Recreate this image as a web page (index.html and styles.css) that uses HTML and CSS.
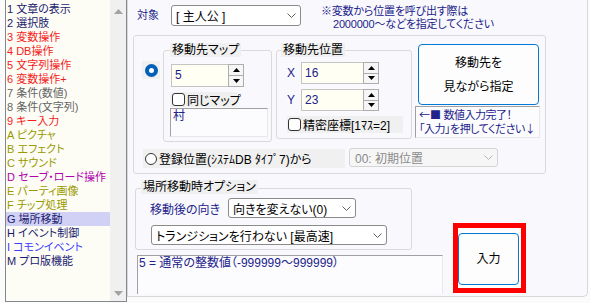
FILE: index.html
```html
<!DOCTYPE html>
<html lang="ja">

<head>
    <meta charset="UTF-8">
    <title>場所移動</title>
    <link rel="stylesheet" href="styles.css">
</head>

<body>
    <div class="cmd-list">
        <ul class="cmd-items">
            <li class="c-navy">1 文章の表示</li>
            <li class="c-navy">2 選択肢</li>
            <li class="c-red">3 変数操作</li>
            <li class="c-red">4 DB操作</li>
            <li class="c-red">5 文字列操作</li>
            <li class="c-red">6 変数操作+</li>
            <li class="c-gray">7 条件(数値)</li>
            <li class="c-gray">8 条件(文字列)</li>
            <li class="c-red">9 キー入力</li>
            <li class="c-olive">A ピクチャ</li>
            <li class="c-olive">B エフェクト</li>
            <li class="c-olive">C サウンド</li>
            <li class="c-purple">D セーブ・ロード操作</li>
            <li class="c-olive">E パーティ画像</li>
            <li class="c-olive">F チップ処理</li>
            <li class="c-navy selected">G 場所移動</li>
            <li class="c-navy">H イベント制御</li>
            <li class="c-blue">I コモンイベント</li>
            <li class="c-navy">M プロ版機能</li>
        </ul>
        <div class="cmd-scroll">
            <svg width="9" height="5" viewBox="0 0 9 5"><polygon points="0,5 4.5,0 9,5" fill="#a3a3a3"/></svg>
            <svg width="9" height="5" viewBox="0 0 9 5"><polygon points="0,0 4.5,5 9,0" fill="#a3a3a3"/></svg>
        </div>
    </div>

    <div class="panel">
        <div class="top-row">
            <span class="lbl lbl-target">対象</span>
            <div class="combo combo-target">
                <span>[ 主人公 ]</span>
                <svg width="9" height="5" viewBox="0 0 9 5"><polyline points="0.5,0.5 4.5,4.5 8.5,0.5" fill="none" stroke="#606060"/></svg>
            </div>
            <div class="note">
                <span>※変数から位置を呼び出す際は</span>
                <span class="note-2">2000000～などを指定してください</span>
            </div>
        </div>

        <div class="outer-grp">
            <div class="row-a">
                <div class="radio-cell"><span class="radio on"></span></div>

                <div class="grp grp-map">
                    <div class="grp-title">移動先マップ</div>
                    <div class="spin spin-map">
                        <span class="spin-field">5</span>
                        <span class="spin-btns">
                            <span><svg width="7" height="4" viewBox="0 0 7 4"><polygon points="0,4 3.5,0 7,4" fill="#000"/></svg></span>
                            <span><svg width="7" height="4" viewBox="0 0 7 4"><polygon points="0,0 3.5,4 7,0" fill="#000"/></svg></span>
                        </span>
                    </div>
                    <div class="check check-map"><span class="box"></span>同じマップ</div>
                    <div class="map-name">村</div>
                </div>

                <div class="grp grp-pos">
                    <div class="grp-title">移動先位置</div>
                    <div class="pos-row">
                        <span class="lbl pos-lbl">X</span>
                        <div class="spin spin-pos">
                            <span class="spin-field">16</span>
                            <span class="spin-btns">
                                <span><svg width="7" height="4" viewBox="0 0 7 4"><polygon points="0,4 3.5,0 7,4" fill="#000"/></svg></span>
                                <span><svg width="7" height="4" viewBox="0 0 7 4"><polygon points="0,0 3.5,4 7,0" fill="#000"/></svg></span>
                            </span>
                        </div>
                    </div>
                    <div class="pos-row">
                        <span class="lbl pos-lbl">Y</span>
                        <div class="spin spin-pos">
                            <span class="spin-field">23</span>
                            <span class="spin-btns">
                                <span><svg width="7" height="4" viewBox="0 0 7 4"><polygon points="0,4 3.5,0 7,4" fill="#000"/></svg></span>
                                <span><svg width="7" height="4" viewBox="0 0 7 4"><polygon points="0,0 3.5,4 7,0" fill="#000"/></svg></span>
                            </span>
                        </div>
                    </div>
                    <div class="check check-pos"><span class="box"></span>精密座標[1ﾏｽ=2]</div>
                </div>

                <div class="right-col">
                    <button class="btn pick-btn">移動先を<br>見ながら指定</button>
                    <div class="info"><span class="sym">←■</span> 数値入力完了！<br>「入力」を押してください<span class="sym">↓</span></div>
                </div>
            </div>

            <div class="row-b">
                <div class="reg-radio"><span class="radio"></span>登録位置(ｼｽﾃﾑDB ﾀｲﾌﾟ7)から</div>
                <div class="combo combo-dis">
                    <span>00: 初期位置</span>
                    <svg width="9" height="5" viewBox="0 0 9 5"><polyline points="0.5,0.5 4.5,4.5 8.5,0.5" fill="none" stroke="#b8b8b8"/></svg>
                </div>
            </div>
        </div>

        <div class="bottom">
            <div class="left-col">
                <div class="grp grp-opt">
                    <div class="grp-title">場所移動時オプション</div>
                    <div class="dir-row">
                        <span class="lbl dir-lbl">移動後の向き</span>
                        <div class="combo combo-dir">
                            <span>向きを変えない(0)</span>
                            <svg width="9" height="5" viewBox="0 0 9 5"><polyline points="0.5,0.5 4.5,4.5 8.5,0.5" fill="none" stroke="#606060"/></svg>
                        </div>
                    </div>
                    <div class="combo combo-trans">
                        <span>トランジションを行わない [最高速]</span>
                        <svg width="9" height="5" viewBox="0 0 9 5"><polyline points="0.5,0.5 4.5,4.5 8.5,0.5" fill="none" stroke="#606060"/></svg>
                    </div>
                </div>
                <div class="msg-box">5 = 通常の整数値（-999999～999999）</div>
            </div>
            <div class="red-box">
                <button class="btn enter-btn">入力</button>
            </div>
        </div>
    </div>
</body>

</html>
```

FILE: styles.css
```css
* {
    box-sizing: border-box;
}

body {
    margin: 0;
    width: 590px;
    height: 303px;
    overflow: hidden;
    display: flex;
    background-color: #fbfbfb;
    font-family: "Liberation Sans", "Noto Sans CJK JP", sans-serif;
    font-size: 11px;
    font-feature-settings: "palt";
    color: #000;
}

/* command list */

.cmd-list {
    margin: -2px 0 0 5px;
    width: 122px;
    height: 304px;
    display: flex;
    border: 1px solid #828790;
    background-color: #fdfdf6;
}

.cmd-items {
    flex: 1;
    margin: 0;
    padding: 3px 0 0 0;
    list-style: none;
}

.cmd-items li {
    height: 14px;
    line-height: 14px;
    padding-left: 1px;
    white-space: nowrap;
}

.cmd-items li.selected {
    background-color: #d1d1f5;
}

.c-navy { color: #1a1a6e; }
.c-red { color: #f41c1c; }
.c-gray { color: #666; }
.c-olive { color: #999900; }
.c-purple { color: #b000b0; }
.c-blue { color: #3c3cff; }

.cmd-scroll {
    width: 16px;
    display: flex;
    flex-direction: column;
    justify-content: space-between;
    align-items: center;
    padding: 10px 0 5px 0;
    background-color: #f0f0f0;
}

.cmd-scroll svg {
    display: block;
}

/* right panel */

.panel {
    width: 461px;
    height: 297px;
    padding: 5px 0 0 5px;
    border: 1px solid #d8d8d8;
    border-top: none;
    border-bottom-right-radius: 5px;
    background-color: #f9f9fd;
}

.lbl {
    color: #22228a;
}

.top-row {
    display: flex;
    align-items: flex-start;
    height: 21px;
    padding-left: 4px;
}

.lbl-target {
    width: 34px;
    line-height: 21px;
}

.combo {
    display: flex;
    align-items: center;
    justify-content: space-between;
    padding: 0 4px 0 4px;
    border: 1px solid #8a8a8a;
    border-radius: 3px;
    background-color: #fff;
    font-size: 12px;
    white-space: nowrap;
}

.combo svg {
    flex: none;
}

.combo-target {
    width: 130px;
    height: 21px;
}

.note {
    margin-left: 20px;
    display: flex;
    flex-direction: column;
    line-height: 12.5px;
    letter-spacing: -0.2px;
    color: #22228a;
}

.note-2 {
    padding-left: 12px;
}

.outer-grp {
    margin-top: 9px;
    width: 413px;
    height: 139px;
    padding: 8px 0 0 8px;
    border: 1px solid #dadada;
    border-radius: 3px;
}

.row-a {
    display: flex;
    align-items: flex-start;
    height: 98px;
}

.radio-cell {
    margin-top: 17px;
    width: 18px;
    height: 18px;
    display: flex;
    align-items: center;
    justify-content: center;
    background-color: #f0f0f0;
}

.radio {
    flex: none;
    width: 13px;
    height: 13px;
    border: 1px solid #333;
    border-radius: 50%;
    background-color: #fff;
}

.radio.on {
    border: 4px solid #005fb8;
    background-color: #fff;
}

/* group boxes */

.grp {
    border: 1px solid #dadada;
    border-radius: 3px;
}

.grp-title {
    width: fit-content;
    padding: 0 2px;
    line-height: 14px;
    margin-top: -8px;
    background-color: #f0f0f0;
    font-size: 12px;
    white-space: nowrap;
}

.grp-map {
    margin: 6px 0 0 3px;
    width: 109px;
    height: 92px;
}

.grp-map .grp-title {
    margin-left: 6px;
}

.spin {
    display: flex;
}

.spin-field {
    flex: 1;
    padding-left: 3px;
    border: 1px solid #c4c4c4;
    border-right: none;
    background-color: #fffff4;
    color: #22228a;
    font-size: 12px;
}

.spin-btns {
    width: 16px;
    display: flex;
    flex-direction: column;
}

.spin-btns span {
    flex: 1;
    display: flex;
    align-items: center;
    justify-content: center;
    border: 1px solid #adadad;
    background-color: #f6f6f6;
}

.spin-btns span + span {
    border-top: none;
}

.spin-map {
    margin: 7px 0 0 7px;
    width: 73px;
    height: 23px;
    line-height: 21px;
}

.check {
    display: flex;
    align-items: center;
    background-color: #f0f0f0;
    font-size: 12px;
    white-space: nowrap;
}

.box {
    flex: none;
    width: 13px;
    height: 13px;
    margin-right: 2px;
    border: 1px solid #333;
    border-radius: 3px;
    background-color: #fff;
}

.check-map {
    margin: 5px 0 0 6px;
    width: 67px;
    height: 15px;
    padding-left: 2px;
}

.map-name {
    margin: 1px 0 0 6px;
    width: 98px;
    height: 29px;
    padding: 1px 0 0 2px;
    line-height: 13px;
    border-top: 1px solid #a0a0a0;
    border-left: 1px solid #a0a0a0;
    border-right: 1px solid #e8e8e8;
    border-bottom: 1px solid #e8e8e8;
    background-color: #fcfcff;
    color: #22228a;
    font-size: 12px;
}

.grp-pos {
    margin: 6px 0 0 4px;
    width: 136px;
    height: 89px;
}

.grp-pos .grp-title {
    margin-left: 4px;
}

.pos-row {
    display: flex;
    align-items: center;
    margin-top: 5px;
    padding-left: 10px;
    height: 22px;
}

.pos-row + .pos-row {
    margin-top: 5px;
}

.pos-lbl {
    width: 14px;
    font-size: 12px;
}

.spin-pos {
    width: 78px;
    height: 22px;
    line-height: 20px;
}

.check-pos {
    margin: 5px 0 0 10px;
    width: 116px;
    height: 17px;
    padding-left: 1px;
}

.right-col {
    margin-left: 3px;
    width: 125px;
}

.btn {
    display: block;
    padding: 0;
    border: 1px solid #0078d4;
    border-radius: 4px;
    background-color: #fdfdfd;
    font-family: inherit;
    font-size: 12px;
    font-feature-settings: "palt";
    color: #000;
}

.pick-btn {
    margin-left: 3px;
    width: 121px;
    height: 61px;
    line-height: 24px;
}

.info {
    margin-top: 1px;
    height: 32px;
    padding: 1px 0 0 3px;
    line-height: 12.5px;
    letter-spacing: -0.5px;
    border-top: 1px solid #a0a0a0;
    border-left: 1px solid #a0a0a0;
    border-right: 1px solid #e8e8e8;
    border-bottom: 1px solid #e8e8e8;
    background-color: #fcfcff;
    color: #22228a;
    white-space: nowrap;
    overflow: hidden;
}

.sym {
    font-family: "Noto Sans CJK JP", sans-serif;
    font-feature-settings: normal;
    letter-spacing: 0;
}

.row-b {
    display: flex;
    align-items: flex-start;
    margin-top: 6px;
}

.reg-radio {
    display: flex;
    align-items: center;
    margin: 1px 0 0 1px;
    width: 202px;
    height: 19px;
    padding-left: 2px;
    background-color: #f0f0f0;
    font-size: 12px;
    white-space: nowrap;
}

.reg-radio .radio {
    width: 12px;
    height: 12px;
    margin-right: 2px;
}

.combo-dis {
    margin-left: 4px;
    width: 149px;
    height: 19px;
    padding-left: 5px;
    border-color: #d4d4d4;
    background-color: #f6f6f6;
    color: #8a8a8a;
}

/* bottom area */

.bottom {
    display: flex;
    align-items: flex-start;
    margin-top: 14px;
}

.left-col {
    margin-left: 2px;
    width: 308px;
}

.grp-opt {
    width: 277px;
    height: 62px;
}

.grp-opt .grp-title {
    margin-top: -9px;
    margin-left: 5px;
    line-height: 14px;
}

.dir-row {
    display: flex;
    align-items: center;
    margin-top: 4px;
    padding-left: 14px;
}

.dir-lbl {
    width: 78px;
    font-size: 12px;
}

.combo-dir {
    width: 128px;
    height: 20px;
}

.combo-trans {
    margin: 7px 0 0 15px;
    width: 236px;
    height: 20px;
}

.msg-box {
    margin: 5px 0 0 2px;
    width: 306px;
    height: 39px;
    padding: 1px 0 0 1px;
    line-height: 13px;
    border-top: 1px solid #a0a0a0;
    border-left: 1px solid #a0a0a0;
    border-right: 1px solid #e8e8e8;
    background-color: #fcfcff;
    color: #22228a;
    font-size: 12px;
    white-space: nowrap;
}

.red-box {
    margin: 35px 0 0 10px;
    width: 73px;
    height: 70px;
    padding-top: 5px;
    border: 5px solid #ff0000;
    background-color: #fff;
}

.enter-btn {
    width: 61px;
    height: 52px;
    line-height: 50px;
}
```
